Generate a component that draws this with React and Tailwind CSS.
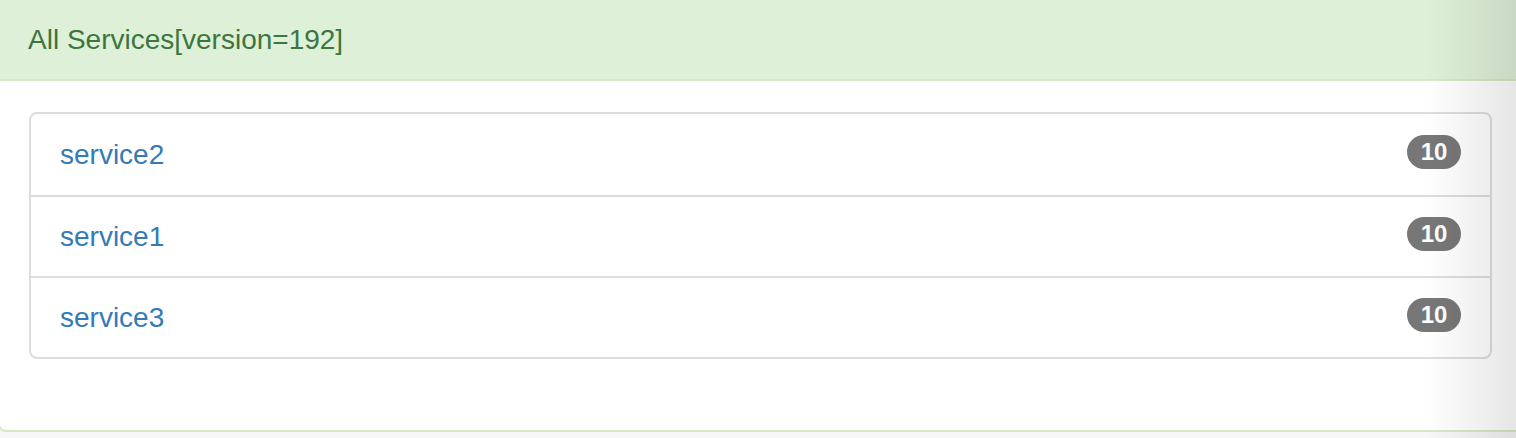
import React from 'react';

const services = [
  { name: 'service2', count: 10 },
  { name: 'service1', count: 10 },
  { name: 'service3', count: 10 },
];

function App() {
  return (
    <div className="relative w-[1516px] h-[438px] overflow-hidden bg-[#f7f7f7] font-['Liberation_Sans',Arial,sans-serif]">
      {/* Panel */}
      <div className="ml-[-2px] w-[1560px] h-[432px] bg-white border-2 border-t-0 border-[#d6e9c6] rounded-b-[8px] flex flex-col">
        {/* Heading */}
        <div className="h-[81px] bg-[#dff0d8] border-b-2 border-[#d6e9c6] flex items-center pl-[28px]">
          <h3 className="text-[28px] leading-none text-[#3c763d]">All Services[version=192]</h3>
        </div>

        {/* Body */}
        <div className="pt-[31px] pl-[29px]">
          <ul className="w-[1463px] border-2 border-[#ddd] rounded-[8px] bg-white">
            {services.map((service, i) => (
              <li
                key={service.name}
                className={`h-[81px] flex items-center justify-between pl-[29px] pr-[29px] ${i > 0 ? 'border-t-2 border-[#ddd]' : ''}`}
              >
                <a href="#" className="text-[28px] text-[#337ab7]">{service.name}</a>
                <span className="mt-[-6px] h-[34px] min-w-[54px] px-[12px] rounded-full bg-[#777] text-white text-[24px] font-bold flex items-center justify-center leading-none">
                  {service.count}
                </span>
              </li>
            ))}
          </ul>
        </div>
      </div>

      {/* right edge shade */}
      <div className="pointer-events-none absolute top-0 right-0 h-full w-[90px] bg-gradient-to-r from-transparent to-black/10" />
    </div>
  );
}

export default App;
